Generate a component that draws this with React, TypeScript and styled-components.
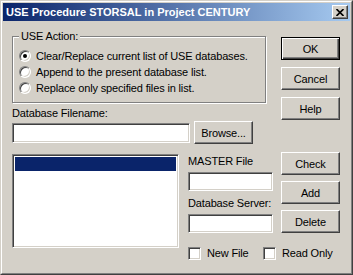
import React from 'react';
import styled, { createGlobalStyle, css } from 'styled-components';

const GlobalStyle = createGlobalStyle`
  html, body {
    margin: 0;
    padding: 0;
    background: #d4d0c8;
  }
  body {
    font-family: "Liberation Sans", Arial, sans-serif;
    font-size: 11px;
    letter-spacing: -0.15px;
    color: #000;
  }
`;

const sunken = css`
  box-sizing: border-box;
  background: #fff;
  border: 1px solid;
  border-color: #808080 #fff #fff #808080;
  box-shadow: inset 1px 1px 0 #404040, inset -1px -1px 0 #d4d0c8;
`;

// Window frame
const Frame = styled.div`
  width: 353px;
  height: 275px;
  box-sizing: border-box;
  background: #d4d0c8;
  border: 1px solid;
  border-color: #d4d0c8 #404040 #404040 #d4d0c8;
`;

const FrameInner = styled.div`
  height: 100%;
  box-sizing: border-box;
  border: 1px solid;
  border-color: #fff #808080 #808080 #fff;
  padding: 1px;
  display: flex;
  flex-direction: column;
`;

const TitleBar = styled.div`
  height: 18px;
  display: flex;
  align-items: center;
  padding: 0 2px;
  background: linear-gradient(to right, #0a246a, #a6caf0);
`;

const TitleText = styled.span`
  flex: 1;
  padding-left: 1px;
  color: #fff;
  font-weight: bold;
  font-size: 11px;
  letter-spacing: 0;
`;

const CloseButton = styled.div`
  width: 16px;
  height: 14px;
  box-sizing: border-box;
  display: flex;
  align-items: center;
  justify-content: center;
  background: #d4d0c8;
  border: 1px solid;
  border-color: #fff #404040 #404040 #fff;
  box-shadow: inset -1px -1px 0 #808080;
`;

const Content = styled.div`
  flex: 1;
  padding: 0 10px 0 9px;
`;

const TopRow = styled.div`
  display: flex;
  justify-content: space-between;
`;

const LeftTop = styled.div`
  width: 254px;
  display: flex;
  flex-direction: column;
`;

const GroupBox = styled.div`
  position: relative;
  margin-top: 15px;
  height: 67px;
  box-sizing: border-box;
  border: 1px solid #808080;
  box-shadow: inset 1px 1px 0 #fff, 1px 1px 0 #fff;
  padding: 11px 0 0 6px;
`;

const GroupLabel = styled.span`
  position: absolute;
  top: -7px;
  left: 6px;
  padding: 0 2px;
  line-height: 13px;
  background: #d4d0c8;
`;

const RadioRow = styled.div`
  height: 16px;
  display: flex;
  align-items: center;
  gap: 5px;
`;

const RadioCircle = styled.span<{ $checked?: boolean }>`
  width: 12px;
  height: 12px;
  box-sizing: border-box;
  border-radius: 50%;
  background: #fff;
  border: 1px solid;
  border-color: #808080 #fff #fff #808080;
  box-shadow: inset 1px 1px 0 #404040, inset -1px -1px 0 #d4d0c8;
  display: flex;
  align-items: center;
  justify-content: center;
  &::after {
    content: '';
    width: 4px;
    height: 4px;
    border-radius: 50%;
    background: ${(p) => (p.$checked ? '#000' : 'transparent')};
  }
`;

const FieldLabel = styled.div<{ $top: number }>`
  margin-top: ${(p) => p.$top}px;
  line-height: 13px;
  white-space: nowrap;
`;

const InputRow = styled.div`
  margin-top: 1px;
  height: 23px;
  display: flex;
  align-items: center;
  gap: 4px;
`;

const TextBox = styled.div<{ $w: number; $h: number; $top?: number }>`
  ${sunken};
  width: ${(p) => p.$w}px;
  height: ${(p) => p.$h}px;
  margin-top: ${(p) => p.$top ?? 0}px;
`;

const ButtonCol = styled.div<{ $top: number }>`
  display: flex;
  flex-direction: column;
  gap: ${(p) => (p.$top === 0 ? 6 : 7)}px;
  padding-top: ${(p) => p.$top}px;
`;

const Button = styled.div<{ $default?: boolean }>`
  width: 59px;
  height: 23px;
  box-sizing: border-box;
  display: flex;
  align-items: center;
  justify-content: center;
  background: #d4d0c8;
  border: 1px solid;
  ${(p) =>
    p.$default
      ? css`
          border-color: #000;
          box-shadow: inset 1px 1px 0 #fff, inset -1px -1px 0 #404040, inset -2px -2px 0 #808080;
        `
      : css`
          border-color: #fff #404040 #404040 #fff;
          box-shadow: inset -1px -1px 0 #808080;
        `}
`;

const BottomGrid = styled.div`
  margin-top: 8px;
  display: grid;
  grid-template-columns: 167px 86px 59px;
  column-gap: 8px;
  align-items: start;
`;

const ListBox = styled.div`
  ${sunken};
  grid-row: 1 / span 2;
  margin-top: 2px;
  height: 94px;
  padding: 2px;
`;

const SelectedRow = styled.div`
  height: 14px;
  background: #0a246a;
`;

const MiddleCol = styled.div`
  padding-left: 1px;
  display: flex;
  flex-direction: column;
`;

const CheckRow = styled.div`
  grid-column: 2 / span 2;
  margin-top: 14px;
  padding-left: 1px;
  display: flex;
  align-items: center;
`;

const CheckItem = styled.label<{ $w?: number }>`
  display: flex;
  align-items: center;
  gap: 6px;
  width: ${(p) => (p.$w ? `${p.$w}px` : 'auto')};
  line-height: 13px;
`;

const CheckBox = styled.span`
  ${sunken};
  width: 13px;
  height: 13px;
`;

const radios = [
  { label: 'Clear/Replace current list of USE databases.', checked: true },
  { label: 'Append to the present database list.', checked: false },
  { label: 'Replace only specified files in list.', checked: false },
];

export default function App() {
  return (
    <>
      <GlobalStyle />
      <Frame>
        <FrameInner>
          <TitleBar>
            <TitleText>USE Procedure STORSAL in Project CENTURY</TitleText>
            <CloseButton>
              <svg width="8" height="7" viewBox="0 0 8 7">
                <path d="M0.5 0 L7.5 7 M7.5 0 L0.5 7" stroke="#000" strokeWidth="1.6" />
              </svg>
            </CloseButton>
          </TitleBar>
          <Content>
            <TopRow>
              <LeftTop>
                <GroupBox>
                  <GroupLabel>USE Action:</GroupLabel>
                  {radios.map((r) => (
                    <RadioRow key={r.label}>
                      <RadioCircle $checked={r.checked} />
                      <span>{r.label}</span>
                    </RadioRow>
                  ))}
                </GroupBox>
                <FieldLabel $top={4}>Database Filename:</FieldLabel>
                <InputRow>
                  <TextBox $w={178} $h={20} />
                  <Button>Browse...</Button>
                </InputRow>
              </LeftTop>
              <ButtonCol $top={16}>
                <Button $default>OK</Button>
                <Button>Cancel</Button>
                <Button>Help</Button>
              </ButtonCol>
            </TopRow>
            <BottomGrid>
              <ListBox>
                <SelectedRow />
              </ListBox>
              <MiddleCol>
                <FieldLabel $top={3}>MASTER File</FieldLabel>
                <TextBox $w={85} $h={19} $top={4} />
                <FieldLabel $top={6}>Database Server:</FieldLabel>
                <TextBox $w={85} $h={19} $top={4} />
              </MiddleCol>
              <ButtonCol $top={0}>
                <Button>Check</Button>
                <Button>Add</Button>
                <Button>Delete</Button>
              </ButtonCol>
              <CheckRow>
                <CheckItem $w={75}>
                  <CheckBox />
                  New File
                </CheckItem>
                <CheckItem>
                  <CheckBox />
                  Read Only
                </CheckItem>
              </CheckRow>
            </BottomGrid>
          </Content>
        </FrameInner>
      </Frame>
    </>
  );
}
